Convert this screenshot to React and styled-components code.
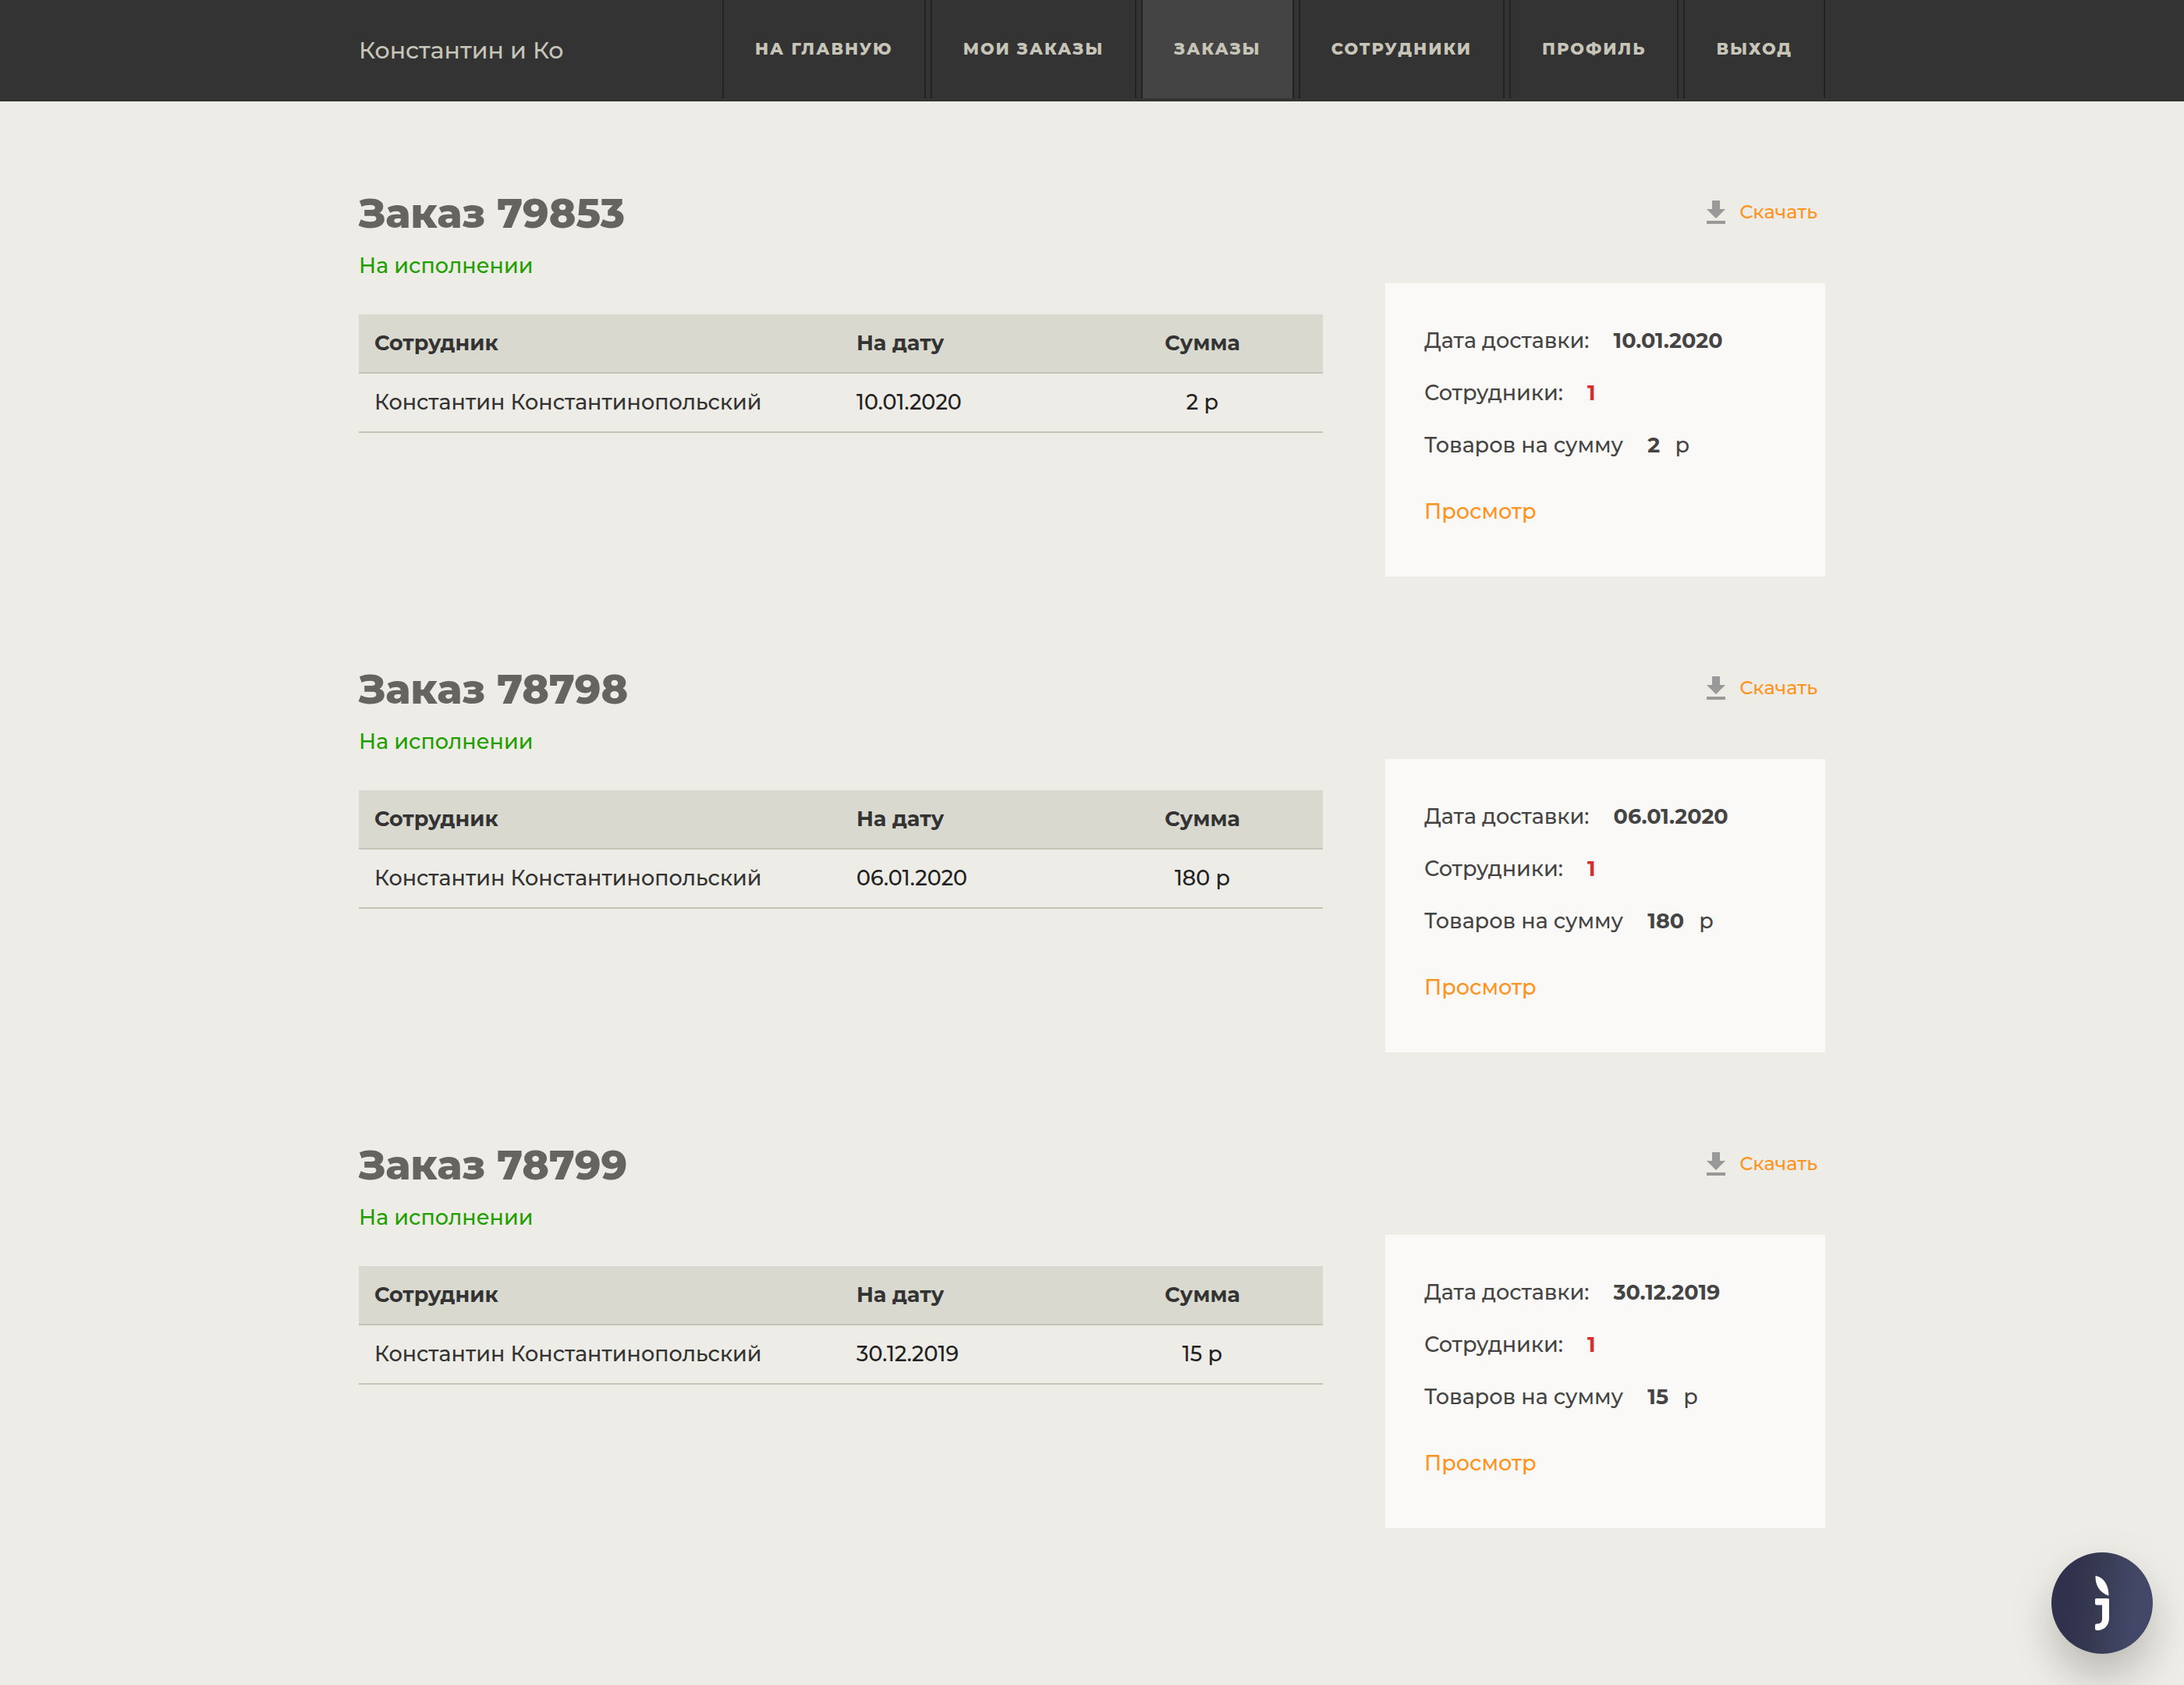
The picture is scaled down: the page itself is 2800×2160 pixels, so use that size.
import React from "react";
import styled, { createGlobalStyle } from "styled-components";

const menu = [
	{ label: "На главную" },
	{ label: "Мои заказы" },
	{ label: "Заказы", active: true },
	{ label: "Сотрудники" },
	{ label: "Профиль" },
	{ label: "Выход" },
];

const orders = [
	{ id: 79853, date: "10.01.2020", sum: 2 },
	{ id: 78798, date: "06.01.2020", sum: 180 },
	{ id: 78799, date: "30.12.2019", sum: 15 },
];

const DownloadIcon = () => (
	<svg width="24" height="30" viewBox="0 0 24 30" fill="#999" aria-hidden="true">
		<path d="M7 0h10v11h7L12 23 0 11h7z" />
		<path d="M0 26h24v4H0z" />
	</svg>
);

const ChatIcon = () => (
	<svg width="18" height="70" viewBox="0 0 18 70" fill="#fff" aria-hidden="true">
		<path d="M0.5 0C11 1.500 17.500 12 17.500 25.500C6.500 22 0 12.500 0.500 0z" />
		<path d="M1.500 29H16.500Q18 29 18 30.500V54C18 63.500 12 70 2.500 70Q0 70 0 68V63.500Q0 61.500 2.500 61.500C6.500 61.500 9 59.500 9 55.500V37.500H2Q0 37.500 0 35.500V30.500Q0 29 1.500 29z" />
	</svg>
);

function Order({ id, date, sum }) {
	return (
		<OrderStyled>
			<div>
				<Title>Заказ {id}</Title>
				<Status>На исполнении</Status>
				<Table>
					<thead>
						<tr>
							<th>Сотрудник</th>
							<th>На дату</th>
							<th>Сумма</th>
						</tr>
					</thead>
					<tbody>
						<tr>
							<td>Константин Константинопольский</td>
							<td>{date}</td>
							<td>{sum} р</td>
						</tr>
					</tbody>
				</Table>
			</div>
			<Side>
				<Download href="#download">
					<DownloadIcon />
					Скачать
				</Download>
				<Card>
					<Line>
						Дата доставки: <b>{date}</b>
					</Line>
					<Line $red>
						Сотрудники: <b>1</b>
					</Line>
					<Line>
						Товаров на сумму <b>{sum}</b> <span>р</span>
					</Line>
					<ViewLink href="#view">Просмотр</ViewLink>
				</Card>
			</Side>
		</OrderStyled>
	);
}

export default function App() {
	return (
		<>
			<GlobalStyle />
			<Header>
				<Container>
					<Company>Константин и Ко</Company>
					<Nav>
						{menu.map((item) => (
							<NavLink key={item.label} href="#" $active={item.active}>
								{item.label}
							</NavLink>
						))}
					</Nav>
				</Container>
			</Header>
			<Main>
				{orders.map((order) => (
					<Order key={order.id} {...order} />
				))}
			</Main>
			<ChatButton aria-label="Чат">
				<ChatIcon />
			</ChatButton>
		</>
	);
}

const GlobalStyle = createGlobalStyle`
	body {
		margin: 0;
		background: #edece6;
		color: #222;
		font-family: Montserrat, Inter, sans-serif;
		font-size: 27px;
		font-weight: 500;
		line-height: 34px;
	}
	a {
		text-decoration: none;
	}
`;

const Header = styled.header`
	background: #333;
`;

const Container = styled.div`
	max-width: 1880px;
	min-height: 130px;
	margin: 0 auto;
	display: flex;
	align-items: center;
	justify-content: space-between;
`;

const Company = styled.div`
	font-size: 30px;
	color: #c7c5b8;
`;

const Nav = styled.nav`
	align-self: flex-start;
	display: flex;
	gap: 6px;
`;

const NavLink = styled.a`
	box-sizing: border-box;
	height: 126px;
	padding: 0 40px;
	border: solid #222;
	border-width: 0 2px;
	background: ${(props) => (props.$active ? "#444" : "transparent")};
	color: #c7c5b8;
	font-size: 21px;
	font-weight: 800;
	line-height: 126px;
	letter-spacing: 2px;
	text-transform: uppercase;
	white-space: nowrap;
`;

const Main = styled.main`
	max-width: 1880px;
	margin: 0 auto;
	padding: 112px 0 88px;
`;

const OrderStyled = styled.section`
	display: grid;
	grid-template-columns: 1fr 564px;
	column-gap: 80px;
	margin-bottom: 113px;
`;

const Title = styled.h2`
	margin: 0;
	font-size: 52px;
	font-weight: 800;
	line-height: 64px;
	color: #656460;
`;

const Status = styled.div`
	margin: 18px 0 45px;
	color: #229f00;
`;

const Table = styled.table`
	width: 100%;
	table-layout: fixed;
	border-collapse: separate;
	border-spacing: 0;
	th,
	td {
		box-sizing: border-box;
		width: 25%;
		padding: 20px;
		border-bottom: 2px solid #c5c4b7;
		text-align: left;
	}
	th {
		background: #d9d9cf;
		color: #333;
		font-weight: 700;
	}
	th:first-child {
		width: 50%;
	}
	td:first-child {
		color: #333;
	}
	th:last-child,
	td:last-child {
		text-align: center;
	}
`;

const Side = styled.div`
	display: flex;
	flex-direction: column;
`;

const Download = styled.a`
	display: flex;
	align-items: center;
	align-self: flex-end;
	gap: 18px;
	height: 60px;
	margin-bottom: 61px;
	padding-right: 10px;
	font-size: 24px;
	color: #ff9320;
`;

const Card = styled.div`
	padding: 40px 50px 66px;
	background: #faf9f7;
	color: #444;
`;

const Line = styled.div`
	line-height: 67px;
	b {
		margin-left: 24px;
		font-weight: 700;
		color: ${(props) => (props.$red ? "#d82c2c" : "inherit")};
	}
	span {
		margin-left: 12px;
	}
`;

const ViewLink = styled.a`
	display: block;
	margin-top: 35px;
	color: #ff9320;
`;

const ChatButton = styled.button`
	position: fixed;
	right: 40px;
	bottom: 40px;
	width: 130px;
	height: 130px;
	padding: 0;
	border: 0;
	border-radius: 50%;
	background: linear-gradient(95deg, #30314d 20%, #35394f 40%, #434868 80%);
	box-shadow: 0 38px 64px -8px rgba(0, 0, 0, 0.14), 0 20px 60px rgba(0, 0, 0, 0.13);
	display: flex;
	align-items: center;
	justify-content: center;
	cursor: pointer;
`;
